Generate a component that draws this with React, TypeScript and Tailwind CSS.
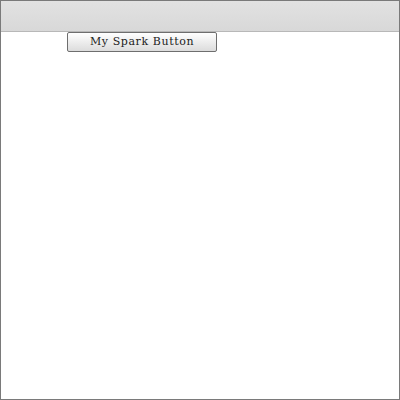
export default function App() {
  return (
    <div className="flex h-[400px] w-[400px] flex-col border border-[#7a7a7a] bg-white">
      <div className="h-[31px] border-b border-[#b8b8b8] bg-gradient-to-b from-[#e2e2e2] to-[#d8d8d8]" />
      <div className="pl-[66px]">
        <button className="flex h-[20px] w-[150px] items-center justify-center rounded-[2px] border border-[#6e6e6e] bg-gradient-to-b from-white to-[#dcdcdc] font-['DejaVu_Serif',serif] text-[11px] tracking-[0.6px] text-[#222]">
          My Spark Button
        </button>
      </div>
    </div>
  );
}
